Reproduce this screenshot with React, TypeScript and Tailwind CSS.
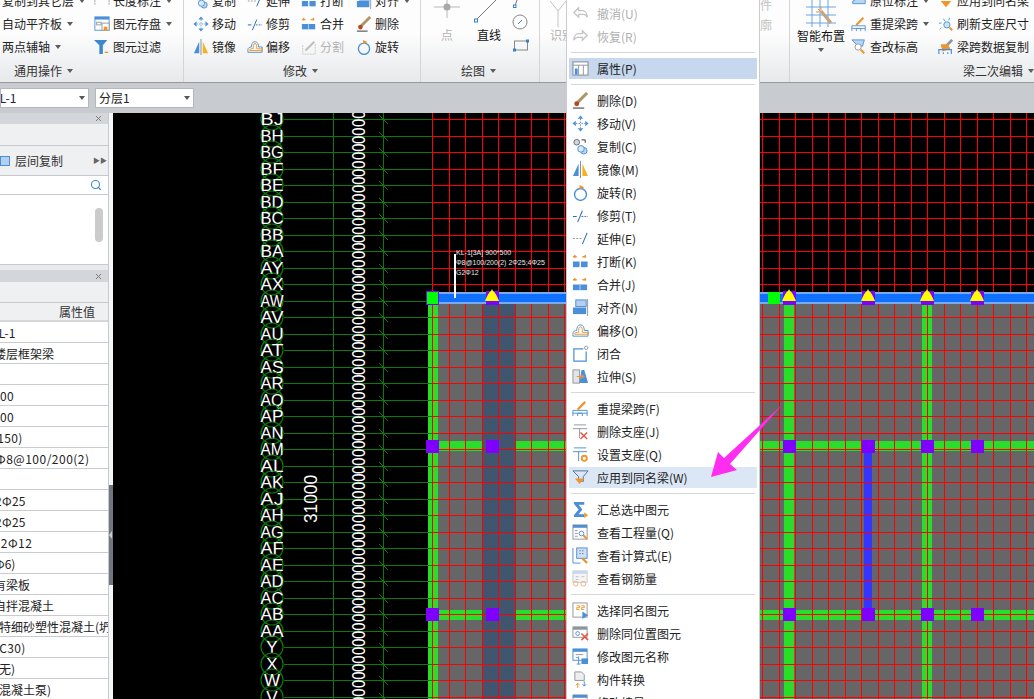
import type { ReactNode } from 'react'
import { Search, X } from 'lucide-react'

const BL = '#4a8fd8'
const OR = '#f0952b'
const GY = '#8f959c'

const icons: Record<string, ReactNode> = {
  undo: <path d="M7 3 2 8l5 5V10h5c2 0 3 1 4 3 0-4-2-7-5-7H7z" fill="none" stroke="#c4c4c4" strokeWidth="1.4" />,
  redo: <path d="M11 3l5 5-5 5V10H6c-2 0-3 1-4 3 0-4 2-7 5-7h4z" fill="none" stroke="#c4c4c4" strokeWidth="1.4" />,
  prop: (
    <>
      <rect x="1" y="2" width="16" height="14" fill="#fff" stroke={GY} strokeWidth="1.2" />
      <path d="M1 5.500h16M7 5.500v10.500M12 5.500v10.500" stroke={GY} />
      <rect x="3" y="9" width="3" height="6.500" fill={BL} />
    </>
  ),
  del: (
    <>
      <path d="M6 11 16 1" stroke="#b0946c" strokeWidth="3.200" />
      <circle cx="5" cy="12.500" r="2.600" fill="#b5481f" />
      <path d="M1 17h12" stroke="#222" />
    </>
  ),
  move: (
    <>
      <path d="M9 .500l3 3.500H6zM9 17.500 12 14H6zM.500 9 4 6v6zM17.500 9 14 6v6z" fill={BL} />
      <path d="M9 4v10M4 9h10" stroke={BL} strokeDasharray="1.500 1.500" />
    </>
  ),
  copy: (
    <>
      <circle cx="5" cy="4.500" r="3" fill="#d5d8dc" stroke="#666" />
      <circle cx="12.500" cy="13.500" r="3.500" fill="#bcd5ef" stroke={BL} />
      <circle cx="9.500" cy="11.500" r="3.500" fill="#dbe8f6" stroke={BL} />
      <path d="M10 2h4v3" fill="none" stroke="#333" />
    </>
  ),
  mirror: (
    <>
      <path d="M1 16 7 3v13z" fill={BL} />
      <path d="M11 3l6 13h-6z" fill="#f5b21f" />
      <path d="M9 0v18" stroke="#7a8a9a" />
    </>
  ),
  rotate: (
    <>
      <circle cx="9" cy="11" r="6.300" fill="none" stroke={BL} strokeWidth="1.500" />
      <path d="M8 1l5 2.500L8 6z" fill={OR} />
    </>
  ),
  trim: (
    <>
      <path d="M1 10h4M6 16 11 4" stroke="#2c6fb8" strokeWidth="1.100" fill="none" />
      <path d="M10 10h7" stroke="#2c6fb8" strokeDasharray="2 1.200" />
    </>
  ),
  extend: (
    <>
      <path d="M1 9h10" stroke={GY} strokeDasharray="2 1.500" />
      <path d="M11 15l5-12" stroke="#2c6fb8" strokeWidth="1.100" />
    </>
  ),
  break: (
    <>
      <path d="M1 4h4M3 2v3M11 4h4M14 2v3" stroke={OR} strokeWidth="1.500" />
      <rect x="1" y="9" width="7" height="6" fill={BL} />
      <rect x="9.500" y="9" width="7" height="6" fill={BL} />
    </>
  ),
  merge: (
    <>
      <path d="M1 4h4M3 2v3M11 4h4M14 2v3" stroke={OR} strokeWidth="1.500" />
      <rect x="1" y="9" width="15" height="6" fill={BL} />
      <path d="M8.500 9v6" stroke="#bcd5ef" />
    </>
  ),
  align: (
    <>
      <rect x="4" y="1" width="11" height="7" fill="#b5d0ee" stroke={BL} />
      <rect x="1" y="9" width="14" height="7" fill={BL} />
      <path d="M16.500 0v18" stroke={GY} />
    </>
  ),
  offset: (
    <>
      <path d="M1 15v-3c0-2 2-3 4-3 0-3 1-6 4-6s4 3 4 6h4v6z" fill="none" stroke={BL} />
      <path d="M3 13v-1c0-1 2-1 4-1 0-3 0-6 2-6s2 3 2 6h6v2z" fill="none" stroke={OR} />
    </>
  ),
  split: (
    <>
      <path d="M2 7v10h14V5" fill="none" stroke="#c4c4c4" strokeDasharray="2 1" />
      <path d="M5 13 15 3" stroke="#c0c0c0" strokeWidth="2.500" />
    </>
  ),
  close: (
    <>
      <path d="M12 4H2v13h13V7" fill="none" stroke={BL} strokeWidth="1.300" />
      <circle cx="15" cy="3" r="1.800" fill="#fff" stroke={GY} />
    </>
  ),
  stretch: (
    <>
      <rect x="1" y="2" width="7" height="14" fill="#e4e4e4" stroke={GY} />
      <path d="M10 2h3l4 14H8z" fill={BL} />
      <path d="M5 9h7M10 7l2.500 2-2.500 2" stroke={OR} fill="none" strokeWidth="1.300" />
    </>
  ),
  respan: (
    <>
      <path d="M6 10 14 2" stroke={OR} strokeWidth="2.400" />
      <path d="M1 17v-6h15v6M6 17v-3h5v3M1 14h15" fill="none" stroke={BL} />
    </>
  ),
  delsup: (
    <>
      <path d="M2 2h13M1 6h15M8 6v10" stroke={GY} fill="none" />
      <path d="M9 10l7 7M16 10l-7 7" stroke="#e0563f" strokeWidth="1.500" />
    </>
  ),
  setsup: (
    <>
      <path d="M2 2h13M1 6h15M7 6v10" stroke={BL} fill="none" />
      <circle cx="13" cy="13" r="2.700" fill="none" stroke={OR} strokeWidth="2" />
    </>
  ),
  apply: (
    <>
      <path d="M1 2h16l-5 6v5H7V8z" fill="none" stroke="#4a6f96" />
      <path d="M3 10h10l-5 6z" fill={OR} />
    </>
  ),
  sum: (
    <>
      <path d="M2 1h11v3H7l4 5-4 5h6v3H2v-2l5-6-5-6z" fill={BL} />
      <path d="M13 12l4 3-4 3z" fill={OR} />
    </>
  ),
  qty: (
    <>
      <rect x="1" y="1" width="15" height="15" fill="#fff" stroke={GY} />
      <rect x="1" y="1" width="15" height="3" fill={BL} />
      <path d="M3 7h3M3 10h3M3 13h3" stroke={GY} />
      <circle cx="10" cy="10" r="2.500" fill="none" stroke={BL} />
      <path d="M12 12l4 4" stroke={OR} strokeWidth="2.200" />
    </>
  ),
  calc: (
    <>
      <path d="M1 1v16h8" fill="none" stroke={BL} />
      <rect x="5" y="1" width="11" height="11" fill="#cfe0f3" stroke={BL} />
      <path d="M8 4h1M11 4h1M8 7h1M11 7h1" stroke="#444" />
      <path d="M11 12l5 5" stroke={OR} strokeWidth="2.400" />
    </>
  ),
  rebar: (
    <>
      <rect x="1" y="1" width="15" height="12" fill="#f4f4f4" stroke="#c5c9ce" />
      <rect x="1" y="1" width="15" height="3" fill="#c5d8ec" />
      <path d="M4 7h3M4 10h3M10 7h3" stroke="#c0c0c0" />
      <circle cx="4" cy="14.500" r="2.500" fill="none" stroke="#eab27a" />
      <circle cx="12" cy="14.500" r="2.500" fill="none" stroke="#eab27a" />
    </>
  ),
  selsame: (
    <>
      <rect x="1" y="1" width="15" height="15" fill="#fff" stroke={GY} />
      <path d="M5 4h3v2H5v2h3M10 4h3v2h-3v2h3" stroke={OR} fill="none" />
      <path d="M11 10l6 4-6 4z" fill={BL} />
    </>
  ),
  delsame: (
    <>
      <rect x="1" y="2" width="15" height="11" fill="#fff" stroke={GY} />
      <rect x="1" y="2" width="15" height="3" fill={GY} />
      <circle cx="6" cy="9" r="2" fill="none" stroke={BL} />
      <path d="M10 9l7 7M17 9l-7 7" stroke="#e0563f" strokeWidth="1.600" />
    </>
  ),
  rename: (
    <>
      <rect x="1" y="1" width="15" height="12" fill="#fff" stroke={BL} />
      <rect x="1" y="1" width="15" height="3" fill={BL} />
      <path d="M4 7h8M4 10h3" stroke={GY} />
      <path d="M7 9v8M5 17h4" stroke={BL} />
      <rect x="10" y="11" width="7" height="6" fill={BL} />
    </>
  ),
  convert: (
    <>
      <path d="M3 1h7l3 3v6H3z" fill="#eceef0" stroke={GY} />
      <path d="M13 11v5M11 14l2 2 2-2" stroke={BL} fill="none" />
      <path d="M6 18v-5M4 15l2-2 2 2" stroke={OR} fill="none" />
    </>
  ),
  save: (
    <>
      <rect x="1" y="1" width="16" height="15" fill="#fff" stroke={BL} />
      <rect x="1" y="1" width="16" height="3" fill={BL} />
      <rect x="3" y="7" width="5" height="3" fill="none" stroke={GY} />
      <rect x="9" y="8" width="8" height="8" fill="#fff" stroke={GY} />
      <rect x="11" y="12" width="4" height="4" fill={OR} />
    </>
  ),
  filter: (
    <>
      <path d="M0 1h15l-5 6v10H6V7z" fill="#3c89d0" />
      <path d="M12 15h4" stroke={OR} strokeWidth="1.500" />
    </>
  ),
  check: (
    <>
      <path d="M1 1h14l-2 7H8z" fill="#bcd5ef" stroke={BL} />
      <circle cx="8" cy="9" r="3.500" fill="#fff" stroke={GY} />
      <path d="M11 12l4 4" stroke={OR} strokeWidth="2.400" />
    </>
  ),
  refresh: (
    <>
      <circle cx="10" cy="10" r="3.500" fill="#cfe0f3" stroke={BL} />
      <path d="M1 8h3M4 13l-2 2M6 3l2 3M13 2l-1 3" stroke={BL} fill="none" />
      <path d="M13 13l3 3" stroke={OR} strokeWidth="2.200" />
    </>
  ),
  brush: (
    <>
      <path d="M10 7 16 1" stroke={GY} strokeWidth="3" />
      <path d="M3 6h8l3 5-9 3z" fill={OR} />
      <path d="M1 17v-5h14v5M6 17v-2M11 17v-2" fill="none" stroke={BL} strokeWidth="1.300" />
    </>
  ),
  orig: <path d="M2 9 12 4h4v8H2z" fill="#bcd5ef" stroke={BL} />,
  same: <path d="M3 1h13l-6 7zM3 9h12l-6 7z" fill={OR} />,
  dim: <path d="M1 2v12M17 2v12M3 4h12" stroke={GY} strokeDasharray="2 1" fill="none" />,
}

function Icon({ name, size = 18 }: { name: string; size?: number }) {
  return (
    <svg width={size} height={size} viewBox="0 0 18 18" className="shrink-0">
      {icons[name]}
    </svg>
  )
}

function Caret() {
  return <span className="ml-[5px] inline-block border-x-[3.5px] border-t-[4px] border-x-transparent border-t-[#5c5c5c]" />
}

function Tool({ icon, label, caret, muted }: { icon: string; label: string; caret?: boolean; muted?: boolean }) {
  return (
    <div className={`flex h-[23px] items-center whitespace-nowrap ${muted ? 'text-[#b4b4b4]' : 'text-[#222]'}`}>
      <span className="w-[19px] shrink-0">
        <Icon name={icon} size={16} />
      </span>
      {label}
      {caret && <Caret />}
    </div>
  )
}

function PlainTool({ label, caret }: { label: string; caret?: boolean }) {
  return (
    <div className="flex h-[23px] items-center whitespace-nowrap text-[#222]">
      {label}
      {caret && <Caret />}
    </div>
  )
}

function GroupLabel({ text, className }: { text: string; className: string }) {
  return (
    <div className={`flex h-[17px] items-center whitespace-nowrap text-[#333] ${className}`}>
      {text}
      <Caret />
    </div>
  )
}

function Ribbon() {
  return (
    <div className="flex h-[83px] shrink-0 overflow-hidden border-b border-[#96999d] bg-gradient-to-b from-[#fdfdfd] from-40% to-[#e7e9eb]">
      {/* 通用操作 */}
      <div className="flex w-[184px] shrink-0 flex-col border-r border-[#d3d6d9]">
        <div className="-mt-[11px] flex h-[73px] shrink-0">
          <div className="w-[94px] shrink-0 pl-[2px]">
            <PlainTool label="复制到其它层" caret />
            <PlainTool label="自动平齐板" caret />
            <PlainTool label="两点辅轴" caret />
          </div>
          <div>
            <Tool icon="dim" label="长度标注" caret />
            <Tool icon="save" label="图元存盘" caret />
            <Tool icon="filter" label="图元过滤" />
          </div>
        </div>
        <GroupLabel text="通用操作" className="pl-[14px]" />
      </div>

      {/* 修改 */}
      <div className="flex w-[237px] shrink-0 flex-col border-r border-[#d3d6d9]">
        <div className="-mt-[11px] flex h-[73px] shrink-0 pl-[9px]">
          <div className="w-[54px] shrink-0">
            <Tool icon="copy" label="复制" />
            <Tool icon="move" label="移动" />
            <Tool icon="mirror" label="镜像" />
          </div>
          <div className="w-[54px] shrink-0">
            <Tool icon="extend" label="延伸" />
            <Tool icon="trim" label="修剪" />
            <Tool icon="offset" label="偏移" />
          </div>
          <div className="w-[55px] shrink-0">
            <Tool icon="break" label="打断" />
            <Tool icon="merge" label="合并" />
            <Tool icon="split" label="分割" muted />
          </div>
          <div>
            <Tool icon="align" label="对齐" caret />
            <Tool icon="del" label="删除" />
            <Tool icon="rotate" label="旋转" />
          </div>
        </div>
        <GroupLabel text="修改" className="pl-[99px]" />
      </div>

      {/* 绘图 */}
      <div className="flex w-[119px] shrink-0 flex-col border-r border-[#d3d6d9]">
        <div className="-mt-[11px] flex h-[73px] shrink-0 pl-[3px]">
          <div className="flex w-[46px] shrink-0 flex-col items-center">
            <svg width="30" height="40" viewBox="0 0 30 40" className="shrink-0">
              <path d="M15 7v22M2 18h26" stroke="#b8b8b8" />
              <circle cx="15" cy="18" r="3.500" fill="#a8a8a8" />
            </svg>
            <span className="text-[#b4b4b4]">点</span>
          </div>
          <div className="flex w-[38px] shrink-0 flex-col items-center">
            <svg width="30" height="40" viewBox="0 0 30 40" className="shrink-0">
              <path d="M2 31 26 7" stroke="#777" />
              <rect x="0.500" y="30" width="3" height="3" fill="#fff" stroke="#3b7fc8" />
            </svg>
            <span className="text-[#111]">直线</span>
          </div>
          <div className="flex flex-col">
            <svg width="24" height="73" viewBox="0 0 24 73" fill="none" className="shrink-0">
              <path d="M7 17 10 8" stroke="#777" />
              <rect x="5.500" y="16" width="2.500" height="2.500" fill="#fff" stroke="#3b7fc8" />
              <circle cx="12" cy="33" r="7" stroke="#888" />
              <path d="M10 35l4-4" stroke="#3b7fc8" />
              <rect x="6.500" y="52" width="13" height="9" stroke="#888" />
              <rect x="5.500" y="60" width="2" height="2" fill="#fff" stroke="#3b7fc8" />
              <rect x="18.500" y="51" width="2" height="2" fill="#fff" stroke="#3b7fc8" />
            </svg>
          </div>
        </div>
        <GroupLabel text="绘图" className="pl-[40px]" />
      </div>

      {/* 识别, mostly behind the context menu */}
      <div className="flex w-[250px] shrink-0 flex-col border-r border-[#d3d6d9]">
        <div className="-mt-[11px] flex h-[73px] shrink-0 pl-[10px]">
          <div className="flex w-[198px] shrink-0 flex-col items-start pt-[10px]">
            <svg width="20" height="30" viewBox="0 0 20 30" fill="none" className="shrink-0">
              <path d="M0 2 8 12v16M16 2 8 12" stroke="#c4c4c4" />
            </svg>
            <span className="text-[#b4b4b4]">识别</span>
          </div>
          <div className="flex w-[30px] flex-col pt-[10px] text-[#c2c2c2]">
            <div className="h-[20px]">构件</div>
            <div className="h-[20px]">轮廓</div>
          </div>
        </div>
      </div>

      {/* 梁二次编辑 */}
      <div className="flex min-w-0 flex-1 flex-col">
        <div className="-mt-[11px] flex h-[73px] shrink-0 pl-[7px]">
          <div className="flex w-[54px] shrink-0 flex-col items-start">
            <svg width="48" height="41" viewBox="0 0 48 41" fill="none" className="shrink-0">
              <path d="M9 18h30M9 26h30M9 34h30M15 10v28M23 10v28M31 10v28" stroke="#6aa5e0" />
              <path d="M24 22l10 12" stroke="#c9a27a" strokeWidth="3" />
              <path d="M21 20l3 3M24 18v3M19 23h3" stroke={OR} />
            </svg>
            <span className="whitespace-nowrap text-[#111]">智能布置</span>
            <span className="ml-[21px] mt-[6px] border-x-[3.5px] border-t-[4px] border-x-transparent border-t-[#5c5c5c]" />
          </div>
          <div className="w-[87px] shrink-0">
            <Tool icon="orig" label="原位标注" caret />
            <Tool icon="respan" label="重提梁跨" caret />
            <Tool icon="check" label="查改标高" />
          </div>
          <div>
            <Tool icon="same" label="应用到同名梁" />
            <Tool icon="refresh" label="刷新支座尺寸" />
            <Tool icon="brush" label="梁跨数据复制" />
          </div>
        </div>
        <GroupLabel text="梁二次编辑" className="pl-[173px]" />
      </div>
    </div>
  )
}

function Combo({ text, className, textClass }: { text: string; className: string; textClass?: string }) {
  return (
    <div className={`flex h-[20px] items-center justify-between overflow-hidden border border-[#b5b8bc] bg-white pr-[3px] ${className}`}>
      <span className={`whitespace-nowrap text-[#222] ${textClass ?? ''}`}>{text}</span>
      <span className="border-x-[3.5px] border-t-[4px] border-x-transparent border-t-[#555]" />
    </div>
  )
}

function Toolbar() {
  return (
    <div className="flex h-[30px] shrink-0 items-center gap-[6px] bg-[#c8cbcf]">
      <Combo text="KL-1" className="w-[89px]" textClass="-ml-[9px]" />
      <Combo text="分层1" className="w-[99px] pl-[3px]" />
    </div>
  )
}

const PANEL_ROWS = [
  { text: 'KL-1', cls: 'ml-[-9px]' },
  { text: '楼层框架梁', cls: 'ml-[-6px]' },
  { text: '', cls: '' },
  { text: '500', cls: 'ml-[-7px] tracking-[0.3px]' },
  { text: '500', cls: 'ml-[-7px] tracking-[0.3px]' },
  { text: '(150)', cls: 'ml-[-7px] tracking-[0.3px]' },
  { text: 'Φ8@100/200(2)', cls: 'ml-[-4px] tracking-[0.5px]' },
  { text: '', cls: '' },
  { text: '2Φ25', cls: 'ml-[-5px] tracking-[0.3px]' },
  { text: '2Φ25', cls: 'ml-[-5px] tracking-[0.3px]' },
  { text: 'G2Φ12', cls: 'ml-[-8px] tracking-[0.5px]' },
  { text: '(Φ6)', cls: 'ml-[-9px]' },
  { text: '有梁板', cls: 'ml-[-6px]' },
  { text: '自拌混凝土', cls: 'ml-[-6px]' },
  { text: '特细砂塑性混凝土(坍落度', cls: 'ml-[-1px]' },
  { text: '(C30)', cls: 'ml-[-5px] tracking-[0.3px]' },
  { text: '(无)', cls: 'ml-[-5px]' },
  { text: '(混凝土泵)', cls: 'ml-[-5px]' },
]

function PanelTitle({ className }: { className: string }) {
  return (
    <div className={`flex shrink-0 items-center justify-end bg-[#d3d6da] pr-[5px] ${className}`}>
      <X size={9} strokeWidth={2.5} className="text-[#777]" />
    </div>
  )
}

function LeftPanel() {
  return (
    <div className="flex w-[113px] shrink-0 bg-[#f6f7f8]">
      <div className="flex w-[109px] shrink-0 flex-col overflow-hidden border-r border-[#c6c9cd]">
        <PanelTitle className="h-[11px]" />
        <div className="h-[22px] shrink-0 border-b border-[#c6c9cd] bg-[#eff0f2]" />
        <div className="flex h-[30px] shrink-0 items-center border-b border-[#c6c9cd] bg-[#eff0f2] text-[#333]">
          <span className="mr-[5px] h-[10px] w-[10px] border border-[#4a8fd8] bg-[#b5d0ee]" />
          层间复制
          <span className="ml-auto pr-[1px] text-[7px] text-[#666]">▶▶</span>
        </div>
        <div className="flex h-[19px] shrink-0 items-center justify-end border-b border-[#c6c9cd] bg-white pr-[6px]">
          <Search size={12} strokeWidth={2.2} className="text-[#3b87c4]" />
        </div>
        <div className="h-[70px] shrink-0 border-b border-[#c6c9cd] bg-white pl-[95px] pt-[13px]">
          <div className="h-[34px] w-[8px] rounded-full bg-[#cbcbcb]" />
        </div>
        <div className="h-[5px] shrink-0 bg-[#e8eaec]" />
        <PanelTitle className="h-[12px]" />
        <div className="h-[21px] shrink-0 border-b border-[#c6c9cd] bg-[#eff0f2]" />
        <div className="flex h-[19px] shrink-0 items-center border-b-2 border-[#d5d7da] bg-[#eff0f2] pl-[59px] pt-[1px] text-[#333]">属性值</div>
        {PANEL_ROWS.map((row, i) => (
          <div key={i} className="flex h-[21px] shrink-0 items-center whitespace-nowrap border-b border-[#c9cbce] bg-white pt-[2px] text-[#222]">
            <span className={row.cls}>{row.text}</span>
          </div>
        ))}
      </div>
      <div className="flex min-w-0 flex-1 flex-col pt-[372px]">
        <div className="flex h-[100px] items-center bg-[#6f7680]">
          <span className="border-y-[4px] border-r-[3px] border-y-transparent border-r-[#c8ccd0]" />
        </div>
      </div>
    </div>
  )
}

const AXES = ['BJ', 'BH', 'BG', 'BF', 'BE', 'BD', 'BC', 'BB', 'BA', 'AY', 'AX', 'AW', 'AV', 'AU', 'AT', 'AS', 'AR', 'AQ', 'AP', 'AN', 'AM', 'AL', 'AK', 'AJ', 'AH', 'AG', 'AF', 'AE', 'AD', 'AC', 'AB', 'AA', 'Y', 'X', 'W', 'V']
const rowY = (i: number) => Math.round(119 + i * 16.5)
const colX = (i: number) => Math.round(432 + i * 16.5)
const RED_ROWS = Array.from({ length: 36 }, (_, i) => rowY(i))
const RED_COLS = Array.from({ length: 37 }, (_, i) => colX(i))
const NODES = [432, 492, 789, 868, 927, 977]
const PILLARS = [492, 789, 868, 927, 977]

function Canvas() {
  return (
    <div className="min-w-0 flex-1 bg-black">
      <svg width="921" height="586" viewBox="113 113 921 586" className="block" style={{ fontFamily: '"Liberation Sans", sans-serif' }}>
        {/* grey slab with beams */}
        <rect x="438" y="303" width="596" height="396" fill="#666" />
        <rect x="482" y="303" width="34" height="396" fill="#3f566e" />
        <g fill="#2bdd2b">
          <rect x="428" y="303" width="10" height="396" />
          <rect x="784" y="303" width="10" height="396" />
          <rect x="922" y="303" width="10" height="396" />
          <rect x="438" y="441" width="44" height="10" />
          <rect x="516" y="441" width="518" height="10" />
          <rect x="438" y="610" width="44" height="10" />
          <rect x="516" y="610" width="518" height="10" />
        </g>
        <rect x="864" y="451" width="8" height="160" fill="#3535ff" />

        {/* axis grid on the left */}
        <g stroke="#0b7a0b" shapeRendering="crispEdges">
          {RED_ROWS.map(y => (
            <line key={y} x1="284" x2="432" y1={y + 0.5} y2={y + 0.5} />
          ))}
          <line x1="333.500" x2="333.500" y1="113" y2="699" />
          <line x1="383.500" x2="383.500" y1="113" y2="699" />
        </g>
        <g stroke="#0b7a0b">
          {RED_ROWS.map(y => (
            <line key={y} x1="379" x2="388" y1={y - 4} y2={y + 5} />
          ))}
        </g>
        {AXES.map((name, i) => (
          <g key={name}>
            <circle cx="272" cy={rowY(i)} r="11" fill="none" stroke="#0b7a0b" strokeWidth="1.200" />
            <text x="272" y={rowY(i) + 6} textAnchor="middle" fontSize="17" fill="#fff" textLength={name.length > 1 ? 23 : undefined} lengthAdjust="spacingAndGlyphs">
              {name}
            </text>
          </g>
        ))}
        {RED_ROWS.map(y => (
          <text key={y} transform={`translate(365 ${y + 8}) rotate(-90)`} fontSize="18" fill="#fff" textLength="16.500" lengthAdjust="spacingAndGlyphs">
            00
          </text>
        ))}
        <text transform="translate(317 523) rotate(-90)" fontSize="18" fill="#fff" textLength="48" lengthAdjust="spacingAndGlyphs">
          31000
        </text>

        {/* red grid */}
        <g stroke="#ff0000" shapeRendering="crispEdges">
          {RED_ROWS.map(y => (
            <line key={y} x1="432" x2="1034" y1={y + 0.5} y2={y + 0.5} />
          ))}
          {RED_COLS.map(x => (
            <line key={x} x1={x + 0.5} x2={x + 0.5} y1="113" y2="699" />
          ))}
        </g>

        {/* top beam */}
        <rect x="426" y="292" width="608" height="12" fill="#0f6fff" />
        <rect x="426" y="292" width="608" height="2" fill="#7aaaf0" />
        <rect x="426" y="302" width="608" height="2" fill="#7aaaf0" />
        <rect x="426" y="291" width="13" height="14" fill="#8000ff" />
        <rect x="427" y="292" width="11" height="12" fill="#00ff00" />
        <rect x="768" y="292" width="12" height="12" fill="#00ff00" />
        {PILLARS.map(x => (
          <g key={x}>
            <rect x={x - 6} y="291" width="13" height="14" fill="#8000ff" />
            <path d={`M${x} 289l1 2c2 1 4 5 6 10h-14c2-5 4-9 6-10z`} fill="#ffff00" />
          </g>
        ))}

        {/* beam joints */}
        {NODES.map(x => (
          <g key={x} fill="#8000ff">
            <rect x={x - 6} y="440" width="13" height="13" />
            <rect x={x - 6} y="608" width="13" height="13" />
          </g>
        ))}

        {/* beam annotation */}
        <rect x="454" y="254" width="2" height="44" fill="#fff" />
        <g fill="#e8e8e8" fontSize="7">
          <text x="456" y="255">KL-1[3A] 900*500</text>
          <text x="456" y="265">Φ8@100/200(2) 2Φ25;4Φ25</text>
          <text x="456" y="275">G2Φ12</text>
        </g>
      </svg>
    </div>
  )
}

type MenuEntry = { icon: string; label: string; state?: 'muted' | 'active' | 'hover' } | 'sep'

const MENU: MenuEntry[] = [
  { icon: 'undo', label: '撤消(U)', state: 'muted' },
  { icon: 'redo', label: '恢复(R)', state: 'muted' },
  'sep',
  { icon: 'prop', label: '属性(P)', state: 'active' },
  'sep',
  { icon: 'del', label: '删除(D)' },
  { icon: 'move', label: '移动(V)' },
  { icon: 'copy', label: '复制(C)' },
  { icon: 'mirror', label: '镜像(M)' },
  { icon: 'rotate', label: '旋转(R)' },
  { icon: 'trim', label: '修剪(T)' },
  { icon: 'extend', label: '延伸(E)' },
  { icon: 'break', label: '打断(K)' },
  { icon: 'merge', label: '合并(J)' },
  { icon: 'align', label: '对齐(N)' },
  { icon: 'offset', label: '偏移(O)' },
  { icon: 'close', label: '闭合' },
  { icon: 'stretch', label: '拉伸(S)' },
  'sep',
  { icon: 'respan', label: '重提梁跨(F)' },
  { icon: 'delsup', label: '删除支座(J)' },
  { icon: 'setsup', label: '设置支座(Q)' },
  { icon: 'apply', label: '应用到同名梁(W)', state: 'hover' },
  'sep',
  { icon: 'sum', label: '汇总选中图元' },
  { icon: 'qty', label: '查看工程量(Q)' },
  { icon: 'calc', label: '查看计算式(E)' },
  { icon: 'rebar', label: '查看钢筋量' },
  'sep',
  { icon: 'selsame', label: '选择同名图元' },
  { icon: 'delsame', label: '删除同位置图元' },
  { icon: 'rename', label: '修改图元名称' },
  { icon: 'convert', label: '构件转换' },
  { icon: 'qty', label: '修改编号' },
]

function ContextMenu() {
  return (
    <div className="absolute left-[566px] top-0 h-[699px] w-[194px] overflow-hidden border-x border-[#c9cbce] bg-white px-[2px] pt-[2px]">
      {MENU.map((item, i) =>
        item === 'sep' ? (
          <div key={i} className="flex h-[9px] items-center px-[2px]">
            <div className="h-px w-full bg-[#d6d7d9]" />
          </div>
        ) : (
          <div key={i} className="flex h-[23px] items-center py-px">
            <div
              className={`flex h-[21px] w-full items-center ${item.state === 'active' ? 'bg-[#c6d7ee]' : item.state === 'hover' ? 'bg-[#dce7f6]' : ''} ${
                item.state === 'muted' ? 'text-[#b0b0b0]' : 'text-[#222]'
              }`}
            >
              <span className="ml-[3px] w-[25px] shrink-0">
                <Icon name={item.icon} size={17} />
              </span>
              {item.label}
            </div>
          </div>
        ),
      )}
    </div>
  )
}

function Arrow() {
  return (
    <svg width="90" height="90" viewBox="700 400 90 90" className="absolute left-[700px] top-[400px]">
      <path d="M782 405 724 458 718 452 711 477 737 470 730 464z" fill="#ff2df0" />
    </svg>
  )
}

export default function App() {
  return (
    <div className="relative flex h-screen w-full flex-col overflow-hidden bg-white text-[12px] leading-none" style={{ fontFamily: '"Noto Sans CJK SC", "Noto Sans", sans-serif' }}>
      <Ribbon />
      <Toolbar />
      <div className="flex min-h-0 flex-1">
        <LeftPanel />
        <Canvas />
      </div>
      <ContextMenu />
      <Arrow />
    </div>
  )
}
